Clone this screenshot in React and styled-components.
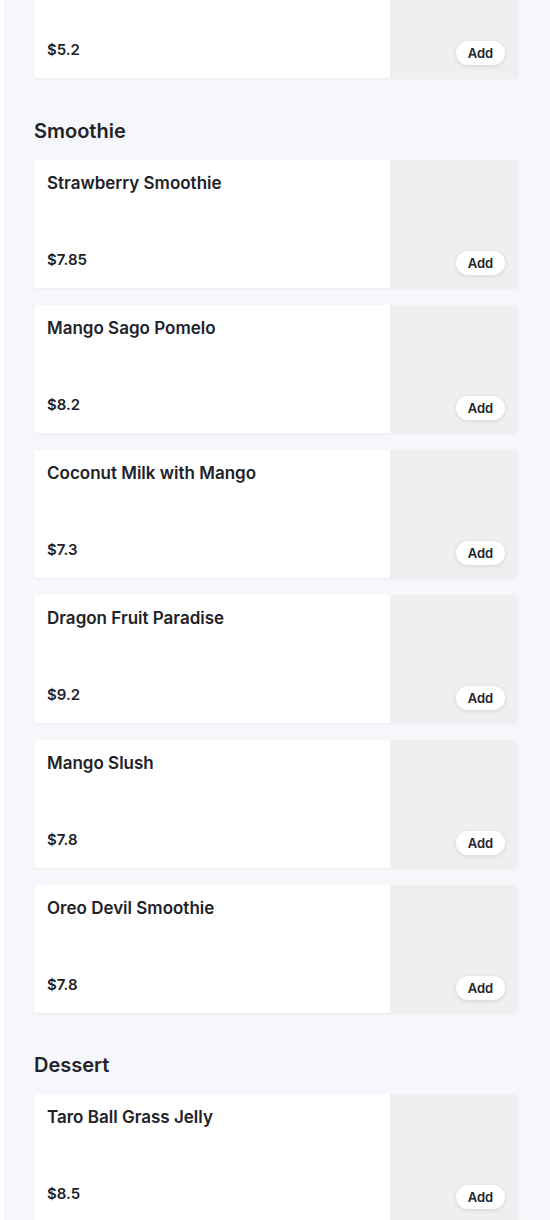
import React from 'react';
import styled, { createGlobalStyle } from 'styled-components';

const GlobalStyle = createGlobalStyle`
    body {
        margin: 0;
        background: #ffffff;
        font-family: Inter, "Noto Sans", sans-serif;
        color: #222228;
    }
`;

const Panel = styled.div`
    margin-left: 4px;
    min-height: 100vh;
    background: #f6f7fb;
    padding: 0 32px 40px 30px;
    overflow: hidden;
`;

const Menu = styled.div`
    margin-top: -50px;
`;

const Section = styled.section`
    & + & {
        margin-top: 39px;
    }

    &:last-child {
        margin-top: 38px;
    }
`;

const SectionTitle = styled.h2`
    margin: 0 0 15px;
    font-size: 20px;
    line-height: 28px;
    font-weight: 600;
`;

const ItemList = styled.div`
    display: flex;
    flex-direction: column;
    gap: 17px;
`;

const Card = styled.div`
    display: flex;
    height: 128px;
    background: #ffffff;
    border-radius: 4px;
    overflow: hidden;
    box-shadow: 0 1px 3px rgba(20, 30, 60, 0.05);
`;

const Info = styled.div`
    flex: 1;
    display: flex;
    flex-direction: column;
    justify-content: space-between;
    padding: 12px 13px 18px;
`;

const ItemName = styled.div`
    font-size: 17px;
    line-height: 22px;
    font-weight: 600;
`;

const Price = styled.div`
    font-size: 15px;
    line-height: 20px;
    font-weight: 600;
`;

const Thumb = styled.div`
    position: relative;
    width: 128px;
    flex-shrink: 0;
    background: #efefef;
`;

const AddButton = styled.button`
    position: absolute;
    right: 13px;
    bottom: 13px;
    width: 49px;
    height: 24px;
    border: 0;
    border-radius: 12px;
    background: #ffffff;
    box-shadow: 0 1px 4px rgba(0, 0, 0, 0.12);
    font-family: inherit;
    font-size: 13px;
    font-weight: 600;
    color: #222228;
    padding: 0;
    cursor: pointer;
`;

const sections = [
    {
        title: null,
        items: [{ name: '', price: 5.2 }],
    },
    {
        title: 'Smoothie',
        items: [
            { name: 'Strawberry Smoothie', price: 7.85 },
            { name: 'Mango Sago Pomelo', price: 8.2 },
            { name: 'Coconut Milk with Mango', price: 7.3 },
            { name: 'Dragon Fruit Paradise', price: 9.2 },
            { name: 'Mango Slush', price: 7.8 },
            { name: 'Oreo Devil Smoothie', price: 7.8 },
        ],
    },
    {
        title: 'Dessert',
        items: [
            { name: 'Taro Ball Grass Jelly', price: 8.5 },
        ],
    },
];

const App = () => (
    <>
        <GlobalStyle />
        <Panel>
            <Menu>
                {sections.map((section, i) => (
                    <Section key={i}>
                        {section.title && <SectionTitle>{section.title}</SectionTitle>}
                        <ItemList>
                            {section.items.map((item, j) => (
                                <Card key={j}>
                                    <Info>
                                        <ItemName>{item.name}</ItemName>
                                        <Price>${item.price}</Price>
                                    </Info>
                                    <Thumb>
                                        <AddButton>Add</AddButton>
                                    </Thumb>
                                </Card>
                            ))}
                        </ItemList>
                    </Section>
                ))}
            </Menu>
        </Panel>
    </>
);

export default App;
